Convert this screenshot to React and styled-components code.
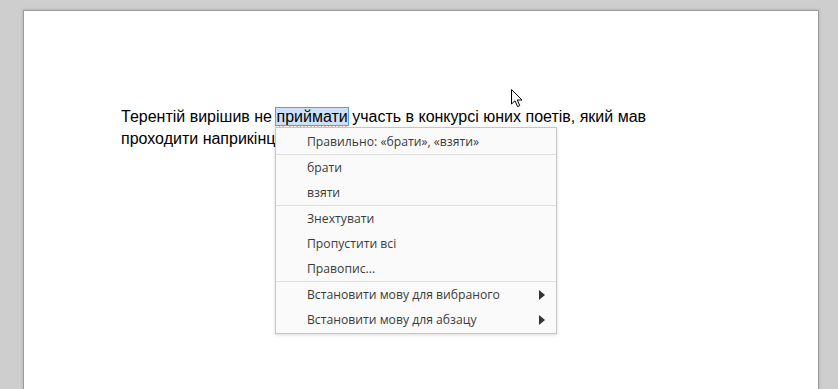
import React from "react";
import styled, { createGlobalStyle } from "styled-components";

const GlobalStyle = createGlobalStyle`
  html, body {
    margin: 0;
    padding: 0;
    background: #cecece;
  }
`;

const Desk = styled.div`
  position: relative;
  width: 838px;
  height: 389px;
  overflow: hidden;
  background: #cecece;
  padding: 10px 19px 0 23px;
  box-sizing: border-box;
`;

const Page = styled.div`
  height: 100%;
  background: #fff;
  border: 1px solid #9c9c9c;
  border-bottom: 0;
  box-shadow: 0 0 3px rgba(0, 0, 0, 0.18);
  box-sizing: border-box;
  padding: 95px 120px 0 97px;
`;

const Paragraph = styled.p`
  margin: 0;
  font-family: "Liberation Sans", Arial, sans-serif;
  font-size: 16px;
  line-height: 22px;
  color: #000;
`;

const Misspelled = styled.span`
  background: #cce1f8;
  border: 1px solid #5b9be0;
  margin: 0 -1px;
  text-decoration: underline wavy #d9866e;
  text-decoration-thickness: 1px;
  text-underline-offset: 2px;
`;

const Menu = styled.div`
  position: absolute;
  left: 275px;
  top: 127px;
  width: 282px;
  box-sizing: border-box;
  padding: 1px 0 1px;
  background: #fafafa;
  border: 1px solid #c6c6c6;
  box-shadow: 0 1px 3px rgba(0, 0, 0, 0.15);
  font-family: "Open Sans", "Noto Sans", sans-serif;
  font-size: 12.2px;
  color: #3a3a3a;
`;

const Item = styled.div`
  display: flex;
  align-items: center;
  justify-content: space-between;
  height: 25px;
  padding: 0 11px 0 31px;
`;

const Separator = styled.div`
  height: 1px;
  background: #dedede;
`;

const Arrow = styled.span`
  width: 0;
  height: 0;
  border-top: 5px solid transparent;
  border-bottom: 5px solid transparent;
  border-left: 6px solid #333;
`;

const Pointer = styled.svg`
  position: absolute;
  left: 511px;
  top: 89px;
`;

const menu = [
  [{ label: "Правильно: «брати», «взяти»" }],
  [{ label: "брати" }, { label: "взяти" }],
  [{ label: "Знехтувати" }, { label: "Пропустити всі" }, { label: "Правопис..." }],
  [
    { label: "Встановити мову для вибраного", sub: true },
    { label: "Встановити мову для абзацу", sub: true },
  ],
];

export default function App() {
  return (
    <>
      <GlobalStyle />
      <Desk>
        <Page>
          <Paragraph>
            Терентій вирішив не <Misspelled>приймати</Misspelled> участь в конкурсі юних поетів, який мав
            <br />
            проходити наприкінці
          </Paragraph>
        </Page>
        <Menu>
          {menu.map((group, gi) => (
            <React.Fragment key={gi}>
              {gi > 0 && <Separator />}
              {group.map((it) => (
                <Item key={it.label}>
                  <span>{it.label}</span>
                  {it.sub && <Arrow />}
                </Item>
              ))}
            </React.Fragment>
          ))}
        </Menu>
        <Pointer width="14" height="20" viewBox="0 0 14 20">
          <path
            d="M0.5 0.5 L0.5 15 L4 11.8 L6.6 17.6 L8.8 16.6 L6.3 11 L11 11 Z"
            fill="#fff"
            stroke="#000"
            strokeWidth="1"
            strokeLinejoin="round"
          />
        </Pointer>
      </Desk>
    </>
  );
}
